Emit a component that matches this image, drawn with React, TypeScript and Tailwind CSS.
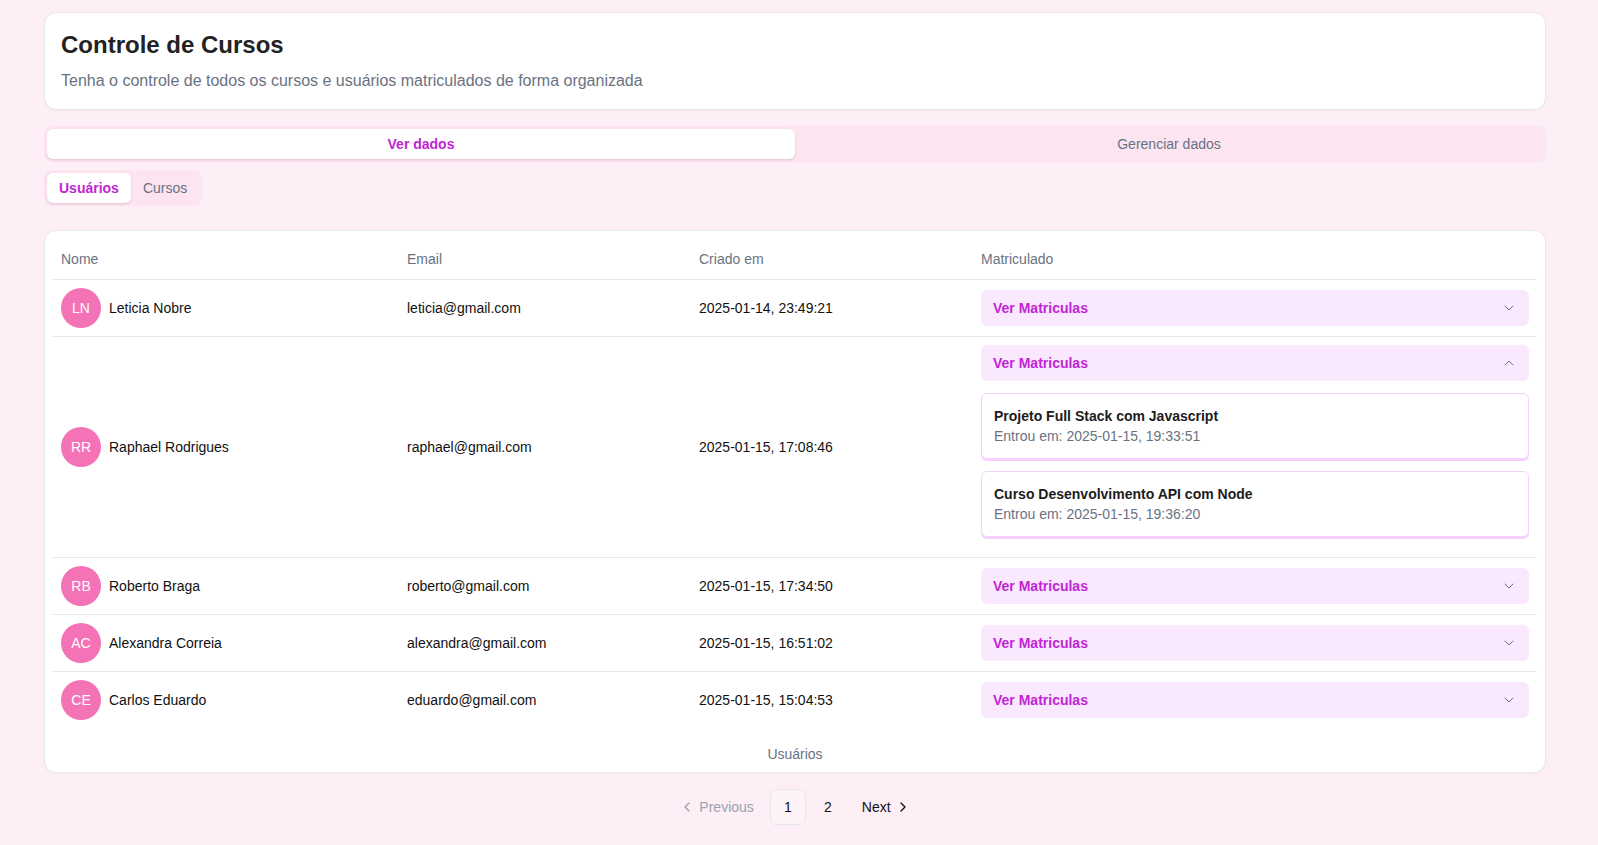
import { useState } from 'react';
import { ChevronDown, ChevronLeft, ChevronRight } from 'lucide-react';

interface Matricula {
  curso: string;
  entrou: string;
}

interface Usuario {
  nome: string;
  email: string;
  criado: string;
  matriculas: Matricula[];
}

const USUARIOS: Usuario[] = [
  { nome: 'Leticia Nobre', email: 'leticia@gmail.com', criado: '2025-01-14, 23:49:21', matriculas: [] },
  {
    nome: 'Raphael Rodrigues',
    email: 'raphael@gmail.com',
    criado: '2025-01-15, 17:08:46',
    matriculas: [
      { curso: 'Projeto Full Stack com Javascript', entrou: '2025-01-15, 19:33:51' },
      { curso: 'Curso Desenvolvimento API com Node', entrou: '2025-01-15, 19:36:20' },
    ],
  },
  { nome: 'Roberto Braga', email: 'roberto@gmail.com', criado: '2025-01-15, 17:34:50', matriculas: [] },
  { nome: 'Alexandra Correia', email: 'alexandra@gmail.com', criado: '2025-01-15, 16:51:02', matriculas: [] },
  { nome: 'Carlos Eduardo', email: 'eduardo@gmail.com', criado: '2025-01-15, 15:04:53', matriculas: [] },
];

function iniciais(nome: string) {
  return nome
    .split(' ')
    .map((p) => p[0])
    .join('')
    .toUpperCase();
}

function Matriculas({ itens, aberto, onToggle }: { itens: Matricula[]; aberto: boolean; onToggle: () => void }) {
  return (
    <div>
      <button
        onClick={onToggle}
        className="flex h-9 w-full items-center justify-between rounded-md bg-[#fae8ff] px-3 text-sm font-bold text-[#c026d3]"
      >
        Ver Matriculas
        <ChevronDown
          size={16}
          strokeWidth={1.5}
          className={aberto ? 'rotate-180 text-gray-500' : 'text-gray-500'}
        />
      </button>
      {aberto && (
        <div className="flex flex-col gap-3 pt-3 pb-3">
          {itens.map((m) => (
            <div
              key={m.curso}
              className="rounded-md border border-[#f5d0fe] bg-white p-3 shadow-[0_2px_0_0_#f5d0fe]"
            >
              <p className="text-sm font-semibold leading-5 text-[#1c1c1c]">{m.curso}</p>
              <p className="text-sm leading-5 text-gray-500">Entrou em: {m.entrou}</p>
            </div>
          ))}
        </div>
      )}
    </div>
  );
}

export default function App() {
  const [aba, setAba] = useState<'ver' | 'gerenciar'>('ver');
  const [sub, setSub] = useState<'usuarios' | 'cursos'>('usuarios');
  const [aberto, setAberto] = useState<number | null>(1);

  return (
    <div className="min-h-screen bg-[#fdeff5] pt-3 pl-11 pr-[52px] pb-5 font-['Liberation_Sans',Arial,sans-serif] text-[#111]">
      {/* Cabeçalho */}
      <div className="flex flex-col gap-2 rounded-xl border border-gray-200 bg-white p-4 shadow-[0_1px_2px_rgba(0,0,0,0.03)]">
        <h1 className="text-2xl font-bold text-[#222]">Controle de Cursos</h1>
        <p className="text-base text-gray-500">
          Tenha o controle de todos os cursos e usuários matriculados de forma organizada
        </p>
      </div>

      {/* Abas principais */}
      <div className="mt-4 grid h-9 grid-cols-2 rounded-lg bg-[#fce4f0] p-[3px]">
        <button
          onClick={() => setAba('ver')}
          className={
            aba === 'ver'
              ? 'rounded-md bg-white text-sm font-bold text-[#c026d3] shadow-sm'
              : 'rounded-md text-sm text-gray-500'
          }
        >
          Ver dados
        </button>
        <button
          onClick={() => setAba('gerenciar')}
          className={
            aba === 'gerenciar'
              ? 'rounded-md bg-white text-sm font-bold text-[#c026d3] shadow-sm'
              : 'rounded-md text-sm text-gray-500'
          }
        >
          Gerenciar dados
        </button>
      </div>

      {/* Sub abas */}
      <div className="mt-2 inline-flex h-9 rounded-lg bg-[#fce4f0] p-[3px]">
        <button
          onClick={() => setSub('usuarios')}
          className={
            sub === 'usuarios'
              ? 'rounded-md bg-white px-3 text-sm font-bold text-[#c026d3] shadow-sm'
              : 'rounded-md px-3 text-sm text-gray-500'
          }
        >
          Usuários
        </button>
        <button
          onClick={() => setSub('cursos')}
          className={
            sub === 'cursos'
              ? 'rounded-md bg-white px-3 text-sm font-bold text-[#c026d3] shadow-sm'
              : 'rounded-md px-3 text-sm text-gray-500'
          }
        >
          Cursos
        </button>
      </div>

      {/* Tabela */}
      <div className="mt-6 rounded-xl border border-gray-200 bg-white p-2 shadow-[0_1px_2px_rgba(0,0,0,0.03)]">
        <table className="w-full table-fixed text-sm">
          <colgroup>
            <col className="w-[346px]" />
            <col className="w-[292px]" />
            <col className="w-[282px]" />
            <col />
          </colgroup>
          <thead>
            <tr className="border-b border-gray-200">
              <th className="h-10 px-2 text-left font-normal text-gray-500">Nome</th>
              <th className="h-10 px-2 text-left font-normal text-gray-500">Email</th>
              <th className="h-10 px-2 text-left font-normal text-gray-500">Criado em</th>
              <th className="h-10 px-2 text-left font-normal text-gray-500">Matriculado</th>
            </tr>
          </thead>
          <tbody>
            {USUARIOS.map((u, i) => (
              <tr key={u.email} className={i < USUARIOS.length - 1 ? 'border-b border-gray-200' : ''}>
                <td className="p-2 align-middle">
                  <div className="flex items-center gap-2">
                    <div className="flex h-10 w-10 items-center justify-center rounded-full bg-[#f472b6] text-sm text-white">
                      {iniciais(u.nome)}
                    </div>
                    <span>{u.nome}</span>
                  </div>
                </td>
                <td className="p-2 align-middle">{u.email}</td>
                <td className="p-2 align-middle">{u.criado}</td>
                <td className="p-2 align-middle">
                  <Matriculas
                    itens={u.matriculas}
                    aberto={aberto === i}
                    onToggle={() => setAberto(aberto === i ? null : i)}
                  />
                </td>
              </tr>
            ))}
          </tbody>
          <caption className="mt-4 caption-bottom text-sm text-gray-500">Usuários</caption>
        </table>
      </div>

      {/* Paginação */}
      <nav className="mt-4 flex items-center justify-center gap-1">
        <button className="flex h-9 items-center gap-1 pl-2.5 pr-3 text-sm text-gray-400">
          <ChevronLeft size={16} />
          Previous
        </button>
        <button className="flex h-9 w-9 items-center justify-center rounded-md border border-gray-200 bg-[#fdf3f7] text-sm">
          1
        </button>
        <button className="flex h-9 w-9 items-center justify-center rounded-md text-sm">2</button>
        <button className="flex h-9 items-center gap-1 pl-3 pr-2.5 text-sm">
          Next
          <ChevronRight size={16} />
        </button>
      </nav>
    </div>
  );
}
